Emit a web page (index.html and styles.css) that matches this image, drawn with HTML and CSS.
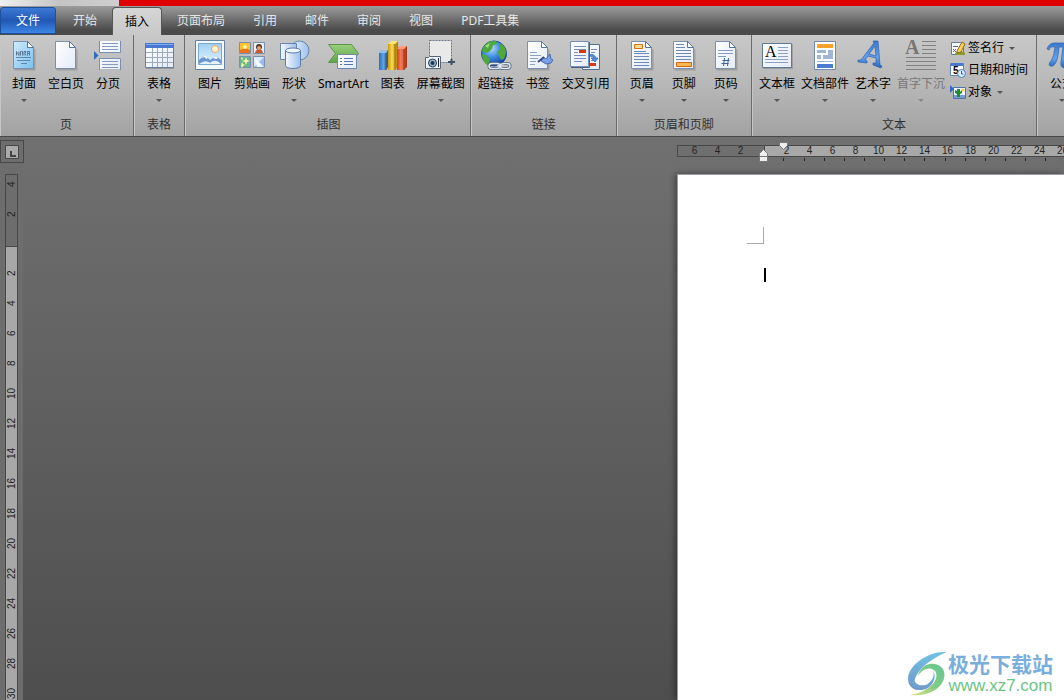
FILE: index.html
```html
<!DOCTYPE html>
<html lang="zh-CN">
<head>
<meta charset="utf-8">
<title>Word</title>
<link rel="stylesheet" href="styles.css">
</head>
<body>
<svg class="defs" aria-hidden="true">
  <defs>
    <linearGradient id="paper" x1="0" y1="0" x2="1" y2="1"><stop offset="0" stop-color="#fff"/><stop offset="1" stop-color="#e3ebf8"/></linearGradient>
    <linearGradient id="sky" x1="0" y1="0" x2="0" y2="1"><stop offset="0" stop-color="#9fd0f6"/><stop offset="1" stop-color="#e4f4fe"/></linearGradient>
    <linearGradient id="cover" x1="0" y1="0" x2="1" y2="1"><stop offset="0" stop-color="#cfeafd"/><stop offset="1" stop-color="#7cc0f0"/></linearGradient>
    <linearGradient id="glass" x1="0" y1="0" x2="1" y2="0"><stop offset="0" stop-color="#f4f9ff"/><stop offset="1" stop-color="#9dbfec"/></linearGradient>
    <linearGradient id="blue" x1="0" y1="0" x2="1" y2="0"><stop offset="0" stop-color="#2f6fb8"/><stop offset=".5" stop-color="#5fa3e6"/><stop offset="1" stop-color="#24588f"/></linearGradient>
    <linearGradient id="gold" x1="0" y1="0" x2="1" y2="0"><stop offset="0" stop-color="#c99a0c"/><stop offset=".4" stop-color="#fbd94b"/><stop offset="1" stop-color="#a87900"/></linearGradient>
    <linearGradient id="red" x1="0" y1="0" x2="1" y2="0"><stop offset="0" stop-color="#d8401c"/><stop offset=".4" stop-color="#f5805c"/><stop offset="1" stop-color="#a82a0c"/></linearGradient>
    <linearGradient id="green" x1="0" y1="0" x2="0" y2="1"><stop offset="0" stop-color="#9bcf7c"/><stop offset="1" stop-color="#5fa546"/></linearGradient>
    <radialGradient id="ocean" cx=".4" cy=".3" r=".7"><stop offset="0" stop-color="#b5dcff"/><stop offset=".5" stop-color="#3d8be4"/><stop offset="1" stop-color="#123f9c"/></radialGradient>
    <linearGradient id="art" x1="0" y1="0" x2="0" y2="1"><stop offset="0" stop-color="#3b78cc"/><stop offset=".6" stop-color="#62a0ee"/><stop offset="1" stop-color="#2b62b4"/></linearGradient>
    <linearGradient id="swoosh" x1="0" y1="0" x2="0" y2="1"><stop offset="0" stop-color="#6ec3e4"/><stop offset="1" stop-color="#7396c8"/></linearGradient>
    <linearGradient id="leaf" x1="1" y1="0" x2="0" y2="1"><stop offset="0" stop-color="#5fc795"/><stop offset=".5" stop-color="#84ca84"/><stop offset="1" stop-color="#e4e884"/></linearGradient>
    <g id="sheet"><path d="M6 2.500h14l6.500 6.500v20.500H5.500V2.500z" fill="#555" opacity=".3" transform="translate(1 1)"/><path d="M5.500 1.500h14l6 6v21h-20z" fill="url(#paper)" stroke="#7b8fae"/><path d="M19.500 1.500v6h6z" fill="#fff" stroke="#57749c"/></g>
  </defs>
</svg>

<div class="app">
  <header class="titlebar"><span class="titlebar-start"></span></header>

  <nav class="tabs">
    <button class="tab tab-file">文件</button>
    <button class="tab">开始</button>
    <button class="tab tab-active">插入</button>
    <button class="tab">页面布局</button>
    <button class="tab">引用</button>
    <button class="tab">邮件</button>
    <button class="tab">审阅</button>
    <button class="tab">视图</button>
    <button class="tab">PDF工具集</button>
  </nav>

  <div class="ribbon">
    <section class="group">
      <div class="tools">
        <button class="tool has-menu"><svg viewBox="0 0 32 32"><use href="#sheet"/><path d="M6 2h13v6h6v20H6z" fill="url(#cover)"/><path d="M19.500 1.500v6h6z" fill="#fff" stroke="#57749c"/><path d="M8.500 15.500v-4l2.500 4v-4m1.500 4v-4h2v4m1.500 0v-4h2l-1 2 1 2m1.500 0v-4h2v4m-2-2h2" fill="none" stroke="#5b7b98"/><path d="M8 17.500h15M9 20.500h13M13 23.500h6" stroke="#5f87ab"/></svg><span>封面</span></button>
        <button class="tool"><svg viewBox="0 0 32 32"><use href="#sheet"/></svg><span>空白页</span></button>
        <button class="tool"><svg viewBox="0 0 32 32"><path d="M8 1h21v11H8zM8 18h21v11H8z" fill="url(#paper)"/><path d="M7.500 1v11.500h21V1M7.500 30V18.500h21V30" fill="none" stroke="#7890b4"/><path d="M10 3.500h16M10 6.500h16M10 9.500h16M10 21.500h16M10 24.500h16M10 27.500h16" stroke="#8798c0"/><path d="M2 11l4.500 4.500L2 20z" fill="#3567c4"/></svg><span>分页</span></button>
      </div>
      <h2 class="group-name">页</h2>
    </section>

    <section class="group">
      <div class="tools">
        <button class="tool has-menu"><svg viewBox="0 0 32 32"><path d="M3 4h28v25H3z" fill="#555" opacity=".35"/><path d="M2.500 3.500h28v24h-28z" fill="url(#paper)" stroke="#667f9f"/><path d="M2 3h29v5H2z" fill="#4778d6"/><path d="M3 4h27v1H3z" fill="#86a9ec"/><path d="M3 12.500h27M3 17.500h27M3 22.500h27M9.500 8v19M14.500 8v19M19.500 8v19M24.500 8v19" stroke="#9daabd"/></svg><span>表格</span></button>
      </div>
      <h2 class="group-name">表格</h2>
    </section>

    <section class="group group-tight">
      <div class="tools">
        <button class="tool"><svg viewBox="0 0 32 32"><path d="M1.500 .5h29v29h-29z" fill="#f3fafd" stroke="#67829e"/><path d="M4.500 3.500h23v21h-23z" fill="url(#sky)" stroke="#7da7c8"/><circle cx="21" cy="9" r="3.500" fill="#fff4d2" stroke="#efa064"/><path d="M5 24v-4l6-5 5 5 6-4 5 4v4z" fill="#6c96d1"/><path d="M8 18l3-3 3 3-2 1-1-2zM19 18l3-2 2 2-2 1z" fill="#fff"/><path d="M5 24c6-4 8-3 11-1 3-3 7-3 11 1z" fill="#e4f2ff"/></svg><span>图片</span></button>
        <button class="tool"><svg viewBox="0 0 32 32"><path d="M3.500 2.500h11v11h-11z" fill="#f7c32e" stroke="#7690b0"/><path d="M4 10q5-3 10 0v3H4z" fill="#e9731f"/><circle cx="9" cy="7" r="2" fill="#fff39a"/><path d="M17.500 2.500h11v11h-11z" fill="#eee" stroke="#7690b0"/><circle cx="23" cy="7" r="3" fill="#4f372c"/><circle cx="23" cy="8" r="2" fill="#dba080"/><path d="M19 13q1-4 4-3 3-1 4 3z" fill="#c85a25"/><path d="M3.500 16.500h11v11h-11z" fill="#66b68e" stroke="#7690b0"/><path d="M10 17l1 3 3 1-3 1-1 3-1-3-3-1 3-1zM6 22l1 2 2 1-2 1-1 2-1-2zM6 17l1 2-1 1-1-2z" fill="#fff5a6"/><path d="M17.500 16.500h11v11h-11z" fill="#dce8ff" stroke="#7690b0"/><path d="M18 27l10-10v10z" fill="#9db9ef"/><path d="M18 17l6 6 4 4h-7z" fill="#f3f7ff"/></svg><span>剪贴画</span></button>
        <button class="tool has-menu"><svg viewBox="0 0 32 32"><circle cx="21.500" cy="10.500" r="9.500" fill="url(#glass)" stroke="#6686af"/><path d="M2.500 3.500h16v16h-16z" fill="url(#glass)" stroke="#6686af"/><path d="M7.500 10.500v15c0 4 15 4 15 0v-15" fill="url(#glass)" stroke="#587ba9"/><ellipse cx="15" cy="10.500" rx="7.500" ry="2.500" fill="#eef6ff" stroke="#587ba9"/></svg><span>形状</span></button>
        <button class="tool"><svg viewBox="0 0 32 32"><path d="M1.500 4.500h23l7 9-7 9h-23l7-9z" fill="url(#green)" stroke="#5a934a"/><path d="M10.500 14.500h19v14h-19z" fill="url(#paper)" stroke="#6d88ae"/><path d="M13 18.500h2m2 0h9M13 21.500h2m2 0h9M13 24.500h2m2 0h9" stroke="#5874a8"/></svg><span>SmartArt</span></button>
        <button class="tool"><svg viewBox="0 0 32 32"><path d="M2 13l3-3h6v17l-2 3H2z" fill="url(#blue)"/><path d="M2 13l3-3h6l-2 3z" fill="#91c2ef"/><path d="M11 4l3-3h7v26l-3 3h-7z" fill="url(#gold)"/><path d="M11 4l3-3h7l-3 3z" fill="#ffe878"/><path d="M20 9l3-3h7v21l-3 3h-7z" fill="url(#red)"/><path d="M20 9l3-3h7l-3 3z" fill="#ff9d7c"/><path d="M9 13v17M18 4v26M27 9v21" stroke="#5c3210" opacity=".5"/></svg><span>图表</span></button>
        <button class="tool has-menu"><svg viewBox="0 0 32 32"><path d="M4.500 .5h22v22h-22z" fill="#e9e9e9" stroke="#64778a" stroke-dasharray="2 1"/><path d="M23 22h7M26.500 19v6" stroke="#3e5264" stroke-width="2"/><path d="M.5 17.500h3l1-1h11v12H.5z" fill="#eef1f5" stroke="#53667b"/><circle cx="7.500" cy="23" r="4" fill="#9cb6d0" stroke="#2c3b4d"/><circle cx="7.500" cy="23" r="2" fill="#17375c"/><path d="M13.500 18v9" stroke="#202a35"/></svg><span>屏幕截图</span></button>
      </div>
      <h2 class="group-name">插图</h2>
    </section>

    <section class="group">
      <div class="tools">
        <button class="tool"><svg viewBox="0 0 32 32"><circle cx="14" cy="13.500" r="12.500" fill="url(#ocean)" stroke="#1d4c94"/><path d="M4 6Q9 0 16 1l1 3-4 1-1 4-3 3-4 1-3-2q0-3 2-5zM2 14l4 1 4 4-1 5-2 1q-5-4-5-11zM21 3q5 4 5 10l-2 6-3 1-2-4-2-4 3-3-1-3z" fill="#4fa83a"/><path d="M5 6l5-3-2 5z" fill="#a7dc7d"/><path d="M12 23.500h5q3 0 3 2.500t-3 2.500h-5q-3 0-3-2.500t3-2.500zM25 23.500h2q3 0 3 2.500t-3 2.500h-4q-3 0-3-2.500t5-2.500zM17 26h7" fill="none" stroke="#4b6078" stroke-width="3"/><path d="M12 23.500h5q3 0 3 2.500t-3 2.500h-5q-3 0-3-2.500t3-2.500zM25 23.500h2q3 0 3 2.500t-3 2.500h-4q-3 0-3-2.500t5-2.500zM17 26h7" fill="none" stroke="#dfe8f1" stroke-width="1.500"/></svg><span>超链接</span></button>
        <button class="tool"><svg viewBox="0 0 32 32"><use href="#sheet"/><path d="M8 12.500h7M8 15.500h11M8 18.500h8M8 21.500h6M8 24.500h5" stroke="#8da0c4"/><path d="M21 17l3 2 4-5 1 5 2 1-2 3-5 1-5-3z" fill="#7da0e4" stroke="#496bb4"/><path d="M16 22l6-5" stroke="#344f8a" stroke-width="2"/></svg><span>书签</span></button>
        <button class="tool"><svg viewBox="0 0 32 32"><path d="M12.500 4.500h17v25h-17z" fill="url(#paper)" stroke="#526f96"/><path d="M.5 1.500h18v25H.5z" fill="url(#paper)" stroke="#7890b4"/><path d="M19.500 2v25.500H1" fill="none" stroke="#465f82"/><path d="M4 6.500h12M4 9.500h12M4 12.500h4M4 15.500h12M4 18.500h12M4 21.500h8M21 9.500h6M21 12.500h4M21 20.500h3" stroke="#7890b8"/><path d="M9 10h7v3H9zM20 23h6v3h-6z" fill="#d8380d"/><path d="M19 15q5-2 7 3h2l-3 4-4-4h3q-1-2-5-2z" fill="#4e8ee0" stroke="#2b62ae" stroke-width=".7"/></svg><span>交叉引用</span></button>
      </div>
      <h2 class="group-name">链接</h2>
    </section>

    <section class="group">
      <div class="tools">
        <button class="tool has-menu"><svg viewBox="0 0 32 32"><use href="#sheet"/><path d="M8.500 4.500h8v4h-8z" fill="#ffdd98" stroke="#dc6f09"/><path d="M8 11.500h12M8 13.500h15M8 16.500h15M8 19.500h15M8 22.500h15M8 25.500h15" stroke="#6d88b7"/></svg><span>页眉</span></button>
        <button class="tool has-menu"><svg viewBox="0 0 32 32"><use href="#sheet"/><path d="M8 4.500h8M8 7.500h9M8 10.500h15M8 13.500h15M8 16.500h15M8 19.500h15" stroke="#6d88b7"/><path d="M8.500 22.500h15v4h-15z" fill="#ffb954" stroke="#d2670f"/></svg><span>页脚</span></button>
        <button class="tool has-menu"><svg viewBox="0 0 32 32"><use href="#sheet"/><path d="M8 10.500h15M8 13.500h15M8 16.500h8" stroke="#8799bd"/><path d="M14.500 18l-1 8m5-8l-1 8m-5-5.500h7m-8 3h7" stroke="#41629a"/></svg><span>页码</span></button>
      </div>
      <h2 class="group-name">页眉和页脚</h2>
    </section>

    <section class="group">
      <div class="tools">
        <button class="tool has-menu"><svg viewBox="0 0 32 32"><path d="M2 4h30v25H2z" fill="#555" opacity=".3"/><path d="M1.500 3.500h29v24h-29z" fill="url(#paper)" stroke="#607995"/><text x="4" y="17" class="serif-a">A</text><path d="M17 7.500h10M17 10.500h10M17 13.500h10M17 16.500h10M4 19.500h23M4 22.500h23" stroke="#8ba0c3"/></svg><span>文本框</span></button>
        <button class="tool has-menu"><svg viewBox="0 0 32 32"><path d="M5.500 1.500h21v28h-21z" fill="#fff" stroke="#718aac"/><path d="M8 4h16v4H8z" fill="#fba22c"/><path d="M8 10h9v3H8zM19 10h5v6h-5zM8 15h4v4H8zM14 15h10v4H14z" fill="#a1b5d6"/><path d="M8 21.500h16" stroke="#9fb4d6"/><path d="M8 24h16v4H8z" fill="#4a7bd0"/></svg><span>文档部件</span></button>
        <button class="tool has-menu"><svg viewBox="0 0 32 32"><path d="M1 20h3L17 3l-1-2h5l2 24 2 1-1 2-8-3v-2l3 0v-5l-8-2-3 4 2 1v2L1 22zM12 14l7 2-1-10z" fill="url(#art)" stroke="#2b63ad" stroke-width=".7" fill-rule="evenodd"/></svg><span>艺术字</span></button>
        <button class="tool has-menu" disabled><svg viewBox="0 0 32 32"><text x="0" y="14" class="drop-a">A</text><path d="M17 1.500h14M17 5.500h14M17 9.500h14M17 13.500h14M1 17.500h30M1 21.500h30M1 25.500h30M1 29.500h30" stroke="#818181"/></svg><span>首字下沉</span></button>
        <div class="stack">
          <button class="row-tool has-menu"><svg viewBox="0 0 16 16"><path d="M1.500 2.500h9l3 3v9h-12z" fill="#f4f8ff" stroke="#617c9e"/><path d="M3 6.500h5M3 9l3 3m0-3l-3 3" stroke="#526b90"/><path d="M5 13q5-4 10 0v2H5z" fill="#8d9a26"/><path d="M7 11l5-9 3 2-4 8-4 1z" fill="#ffd350" stroke="#8d6420"/></svg><span>签名行</span></button>
          <button class="row-tool"><svg viewBox="0 0 16 16"><path d="M.5 1.500h13v12H.5z" fill="#fff" stroke="#6183bb"/><path d="M1 1h12v3H1z" fill="#4a79c9"/><text x="3" y="12" class="day">5</text><circle cx="11.500" cy="11.500" r="4" fill="#dcecff" stroke="#4e7cbd"/><path d="M11.500 9v3h2" fill="none" stroke="#375e95"/></svg><span>日期和时间</span></button>
          <button class="row-tool has-menu"><svg viewBox="0 0 16 16"><path d="M3.500 3.500h12v11h-12z" fill="#e9f5ff" stroke="#4f74a5"/><path d="M4 11h11v3H4z" fill="#749dcc"/><path d="M0 1l4 4-4 4z" fill="#3268c5"/><path d="M7 13V10L5 9V6l2 1V5h3v3l2-2v3l-2 1v3z" fill="#238a2e"/><circle cx="13" cy="6" r="1.500" fill="#f4d041"/></svg><span>对象</span></button>
        </div>
      </div>
      <h2 class="group-name">文本</h2>
    </section>

    <section class="group group-last">
      <div class="tools">
        <button class="tool has-menu"><svg viewBox="0 0 32 32"><path d="M1 9q2-6 7-6h20v4h-6l-2 14q0 4 5 1l1 2q-4 5-8 4-4-1-3-6l2-15h-4q-1 13-4 17-3 4-6 1 0-3 2-4 3-4 4-14-5-1-6 3z" fill="url(#art)" stroke="#2b63ad" stroke-width=".7"/></svg><span>公式</span></button>
      </div>
    </section>
  </div>

  <main class="workspace">
    <aside class="rail">
      <button class="tab-stop" aria-label="制表符"><svg viewBox="0 0 14 14"><path d="M.5 .5h13v13H.5z" fill="#aaa" stroke="#484848"/><path d="M5 6h2v4h4v2H5z" fill="#444"/></svg></button>
      <div class="ruler-v">
        <div class="v-margin"><span>4</span><span>2</span></div>
        <div class="v-body"><span>2</span><span>4</span><span>6</span><span>8</span><span>10</span><span>12</span><span>14</span><span>16</span><span>18</span><span>20</span><span>22</span><span>24</span><span>26</span><span>28</span><span>30</span></div>
      </div>
    </aside>
    <div class="canvas">
      <div class="sheet-column">
        <div class="ruler-h">
          <div class="h-scale">
            <div class="h-margin"><span>6</span><span>4</span><span>2</span></div>
            <div class="h-body"><span>2</span><span>4</span><span>6</span><span>8</span><span>10</span><span>12</span><span>14</span><span>16</span><span>18</span><span>20</span><span>22</span><span>24</span><span>26</span></div>
          </div>
          <svg class="markers" viewBox="0 0 387 22"><path d="M106.500 16v3M127.500 16v3M147.500 16v3M167.500 16v3M187.500 16v3M207.500 16v3M227.500 16v3M247.500 16v3M268.500 16v3M288.500 16v3M308.500 16v3M328.500 16v3M348.500 16v3M368.500 16v3" stroke="#222"/><path d="M102.500 .5h8v3l-4 4-4-4z" fill="#eee" stroke="#777"/><path d="M82.500 14.500v-3l4-4 4 4v3zM82.500 14.500h8v5h-8z" fill="#eee" stroke="#777"/></svg>
        </div>
        <article class="page"><div class="corner"></div><div class="caret"></div></article>
      </div>
    </div>
    <div class="watermark">
      <svg viewBox="12 14 106 124"><path d="M117 20C80 14 14 50 14 92c0 16 10 28 26 30-10-8-12-24-4-38C48 58 84 34 117 20z" fill="url(#swoosh)"/><path d="M30 92c2 14 18 22 36 14 14-8 20-24 15-38 13 22-3 54-35 54-14 0-22-14-16-30z" fill="url(#swoosh)"/><path d="M72 52C58 54 44 68 40 84c10-14 22-22 34-20 18 4 20 20 12 34-12 20-42 34-68 37 44 6 94-15 94-55 0-20-20-32-40-28z" fill="url(#leaf)"/></svg>
      <div class="mark-text"><strong>极光下载站</strong><span>www.xz7.com</span></div>
    </div>
  </main>
</div>
</body>
</html>
```

FILE: styles.css
```css
* { box-sizing: border-box; }

body {
  margin: 0;
  font: 12px/20px "Noto Sans", "Noto Sans CJK SC", sans-serif;
  color: #000;
}

button {
  margin: 0;
  padding: 0;
  border: 0;
  background: none;
  font: inherit;
  color: inherit;
  white-space: nowrap;
}

.defs { position: absolute; width: 0; height: 0; }

.app {
  display: flex;
  flex-direction: column;
  height: 100vh;
  overflow: hidden;
}

.titlebar { flex: none; display: flex; height: 6px; background: #e00000; }
.titlebar-start {
  width: 119px;
  background: linear-gradient(90deg, #f0f0f0, #c4c4c4 50%, #cfcfcf);
}

.tabs {
  flex: none;
  display: flex;
  align-items: flex-end;
  height: 29px;
  background: linear-gradient(#9c9c9c, #4b4b4b 85%);
  border-bottom: 1px solid #4c4c4c;
}
.tab { height: 27px; padding: 0 14px; color: #e6e6e6; }
.tab-file {
  margin-right: 3px;
  border: 1px solid #1c4f9e;
  border-radius: 3px 3px 0 0;
  background: linear-gradient(#3c7ad4, #2257b4 50%, #3d86e4);
  color: #fff;
}
.tabs .tab-file { padding: 0 15px; }
.tab-active {
  height: 28px;
  margin-bottom: -1px;
  border: 1px solid #555;
  border-bottom: 0;
  border-radius: 4px 4px 0 0;
  background: linear-gradient(#d6d6d6, #c8c8c8);
  color: #000;
}
.tabs .tab-active { padding: 0 12px; margin-left: 1px; margin-right: 1px; }

.ribbon {
  flex: none;
  display: flex;
  height: 102px;
  overflow: hidden;
  background: linear-gradient(#c8c8c8, #b7b7b7 50%, #a2a2a2);
  border-bottom: 1px solid #484848;
}
.group {
  flex: none;
  display: flex;
  flex-direction: column;
  justify-content: space-between;
  padding: 0 4px 1px;
  border-right: 1px solid #6b6b6b;
  box-shadow: inset 1px 0 #c6c6c6;
}
.group:first-child { padding-left: 3px; }
.group-tight { padding-right: 2px; }
.group-tight + .group { padding-right: 3px; }
.group-last { border-right: 0; }
.group-name {
  margin: 0;
  font-size: 12px;
  font-weight: normal;
  line-height: 20px;
  text-align: center;
  color: #303030;
}
.tools { display: flex; }
.tool {
  display: flex;
  flex-direction: column;
  align-items: center;
  min-width: 42px;
  padding: 5px 3px 0;
}
.tool svg { width: 32px; height: 32px; margin-bottom: 2px; }
.has-menu::after {
  content: "";
  border: 3px solid transparent;
  border-top-color: #555;
  border-bottom: 0;
}
.tool::after { margin-top: 5px; }
.tool:disabled { color: #777; }
.tool:disabled::after { border-top-color: #888; }

.stack { display: flex; flex-direction: column; padding: 2px 4px 0 2px; }
.row-tool { display: flex; align-items: center; gap: 2px; height: 22px; }
.row-tool svg { width: 16px; height: 16px; }
.row-tool::after { margin-left: 3px; }

.serif-a { font: 16px "Liberation Serif", serif; }
.drop-a { font: bold 20px "Liberation Serif", serif; fill: #777; }
.day { font: bold 10px "Liberation Sans", sans-serif; }

.workspace {
  flex: 1;
  min-height: 0;
  position: relative;
  display: flex;
  background: linear-gradient(#707070, #4e4e4e);
}
.rail {
  flex: none;
  display: flex;
  flex-direction: column;
  width: 23px;
  padding-top: 3px;
  background: #6d6d6d;
  font: 10px/11px "Liberation Sans", sans-serif;
  color: #222;
}
.tab-stop {
  display: grid;
  place-items: center;
  width: 24px;
  height: 23px;
  border: 1px solid #484848;
}
.tab-stop svg { width: 14px; height: 14px; }
.ruler-v {
  flex: 1;
  min-height: 0;
  display: flex;
  flex-direction: column;
  width: 13px;
  margin: 11px 0 0 5px;
  border: 1px solid #484848;
  border-bottom: 0;
  overflow: hidden;
}
.ruler-v span {
  flex: none;
  height: 30px;
  text-align: center;
  writing-mode: vertical-rl;
  transform: rotate(180deg);
}
.v-margin {
  flex: none;
  display: flex;
  flex-direction: column;
  justify-content: flex-end;
  height: 72px;
  padding-bottom: 17px;
  border-bottom: 1px solid #484848;
}
.v-body {
  flex: 1;
  min-height: 0;
  display: flex;
  flex-direction: column;
  padding-top: 11px;
  background: #a8a8a8;
}

.canvas {
  flex: 1;
  min-width: 0;
  display: grid;
  grid-template-columns: 654fr 387fr;
  overflow: hidden;
}
.sheet-column {
  grid-column: 2;
  min-width: 0;
  display: flex;
  flex-direction: column;
  padding-top: 8px;
}
.ruler-h {
  position: relative;
  font: 10px/10px "Liberation Sans", sans-serif;
  color: #222;
}
.h-scale {
  display: flex;
  height: 12px;
  border: 1px solid #484848;
  border-right: 0;
  overflow: hidden;
}
.h-scale span { flex: none; width: 23px; text-align: center; }
.h-margin {
  flex: none;
  display: flex;
  justify-content: flex-end;
  width: 87px;
  padding-right: 12px;
  border-right: 1px solid #484848;
}
.h-body {
  flex: 1;
  min-width: 0;
  display: flex;
  padding-left: 10px;
  background: #a8a8a8;
}
.markers {
  position: absolute;
  left: 0;
  top: -3px;
  width: 387px;
  height: 22px;
}
.page {
  flex: 1;
  margin-top: 17px;
  padding: 52px 0 0 69px;
  border: 1px solid #9a9da4;
  border-width: 1px 0 0 1px;
  background: #fff;
  box-shadow: -2px 0 6px rgba(0, 0, 0, .4);
}
.corner {
  width: 17px;
  height: 17px;
  border: 1px solid #aaa;
  border-width: 0 1px 1px 0;
}
.caret { width: 2px; height: 14px; margin: 24px 0 0 17px; background: #000; }

.watermark {
  position: absolute;
  right: 11px;
  bottom: 4px;
  display: flex;
  align-items: center;
}
.watermark svg { width: 42px; height: 46px; }
.mark-text { display: flex; flex-direction: column; align-items: center; }
.mark-text strong {
  font: bold 21px/26px "Noto Sans CJK SC", sans-serif;
  color: #7aaedc;
}
.mark-text span {
  font: 17px/20px "Liberation Sans", sans-serif;
  color: #6dc483;
}
```
